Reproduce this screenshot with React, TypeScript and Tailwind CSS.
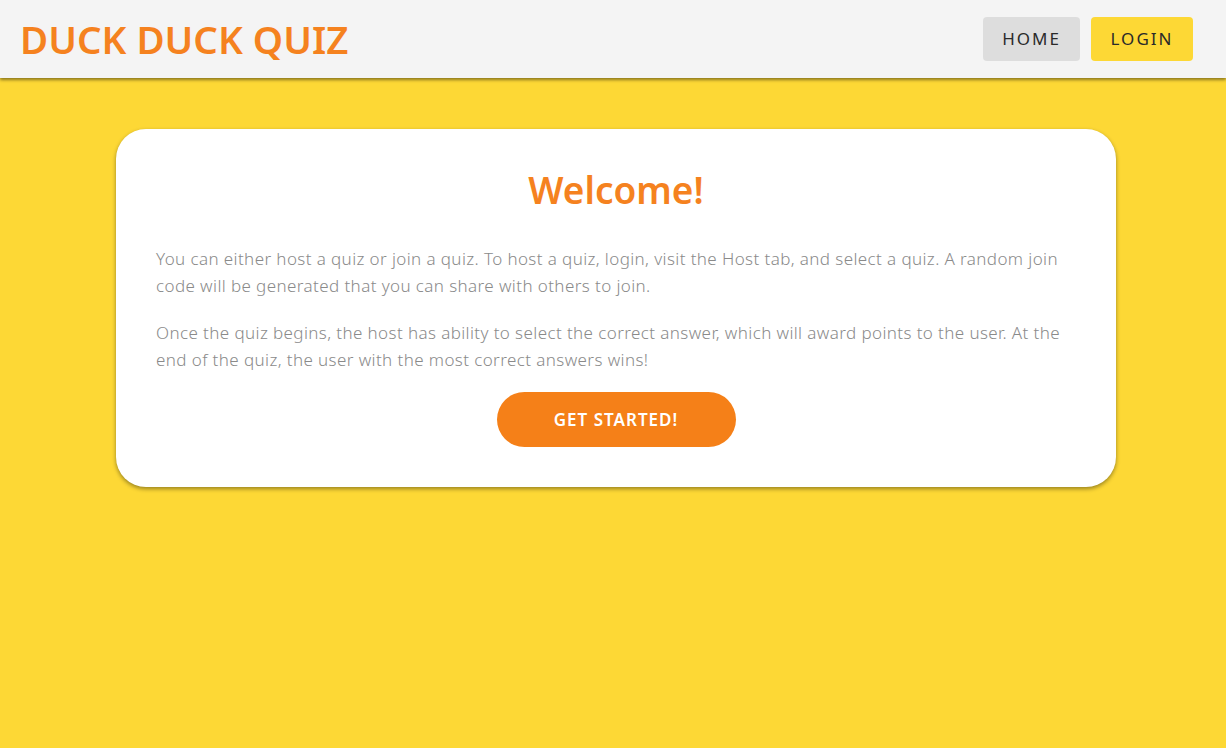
export default function App() {
  return (
    <div className="min-h-[748px] bg-[#fdd835] font-['Noto_Sans',sans-serif]">
      <header className="h-[78px] bg-[#f4f4f4] shadow-[0_2px_3px_rgba(0,0,0,0.45)] flex items-center justify-between pl-5 pr-[33px]">
        <h1 className="text-[38.5px] font-semibold text-[#f5821f] leading-none">DUCK DUCK QUIZ</h1>
        <nav className="flex gap-[11px]">
          <button className="h-11 w-[97px] rounded-[4px] bg-[#dddddd] text-[17px] tracking-[2px] text-[#2a2a2a]">HOME</button>
          <button className="h-11 w-[102px] rounded-[4px] bg-[#fdd835] text-[17px] tracking-[2px] text-[#2a2a2a]">LOGIN</button>
        </nav>
      </header>
      <main className="flex justify-center pt-[51px] pl-[6px]">
        <section className="w-[1000px] bg-white rounded-[30px] shadow-[0_2px_4px_rgba(0,0,0,0.4)] px-10 pt-[38px] pb-10 flex flex-col items-center">
          <h2 className="text-[37px] font-semibold text-[#f5821f] leading-[46px]">Welcome!</h2>
          <p className="mt-[32px] self-stretch pr-[8px] text-[17px] tracking-[0.4px] leading-[27px] font-light text-[#8a8a8a]">
            You can either host a quiz or join a quiz. To host a quiz, login, visit the Host tab, and select a quiz. A random join code will be generated that you can share with others to join.
          </p>
          <p className="mt-5 self-stretch pr-[8px] text-[17px] tracking-[0.4px] leading-[27px] font-light text-[#8a8a8a]">
            Once the quiz begins, the host has ability to select the correct answer, which will award points to the user. At the end of the quiz, the user with the most correct answers wins!
          </p>
          <button className="mt-[19px] h-[55px] w-[239px] rounded-full bg-[#f58018] text-white font-semibold text-[17px] tracking-[1px]">GET STARTED!</button>
        </section>
      </main>
    </div>
  );
}
